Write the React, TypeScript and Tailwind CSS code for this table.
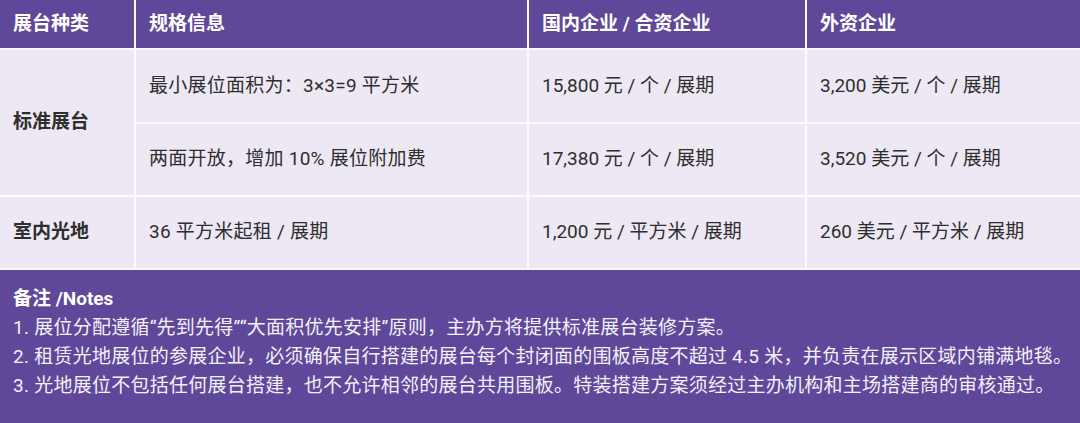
import React from "react";

const font = { fontFamily: 'Roboto, "Noto Sans CJK SC", sans-serif' };

export default function App() {
  const head = "bg-[#5f4899] text-white font-bold text-[19px] flex items-center px-[13px]";
  const cell = "bg-[#ede8f3] text-[#2e2e2e] text-[19px] flex items-center px-[13px]";
  return (
    <div className="w-[1080px] h-[423px] bg-[#fbfafd] flex flex-col [text-spacing-trim:space-all]" style={font}>
      <div className="grid grid-cols-[134px_391px_276px_1fr] grid-rows-[48px_72px_71px_71px] gap-[2px] bg-[#fbfafd]">
        <div className={head}>展台种类</div>
        <div className={head}>规格信息</div>
        <div className={head}>国内企业 / 合资企业</div>
        <div className={head}>外资企业</div>

        <div className={`${cell} row-span-2 font-bold`}>标准展台</div>
        <div className={`${cell} tracking-[0.25px]`}>最小展位面积为：3×3=9 平方米</div>
        <div className={cell}>15,800 元 / 个 / 展期</div>
        <div className={cell}>3,200 美元 / 个 / 展期</div>

        <div className={`${cell} tracking-[0.25px]`}>两面开放，增加 10% 展位附加费</div>
        <div className={cell}>17,380 元 / 个 / 展期</div>
        <div className={cell}>3,520 美元 / 个 / 展期</div>

        <div className={`${cell} font-bold`}>室内光地</div>
        <div className={`${cell} tracking-[0.25px]`}>36 平方米起租 / 展期</div>
        <div className={cell}>1,200 元 / 平方米 / 展期</div>
        <div className={cell}>260 美元 / 平方米 / 展期</div>
      </div>
      <div className="flex-1 mt-[2px] bg-[#5f4899] text-[#f3f0f8] text-[19px] leading-[29px] px-[13px] pt-[14px] whitespace-nowrap tracking-[0.25px]">
        <div className="font-bold text-white tracking-normal">备注 /Notes</div>
        <div>1. 展位分配遵循“先到先得”“大面积优先安排”原则，主办方将提供标准展台装修方案。</div>
        <div>2. 租赁光地展位的参展企业，必须确保自行搭建的展台每个封闭面的围板高度不超过 4.5 米，并负责在展示区域内铺满地毯。</div>
        <div>3. 光地展位不包括任何展台搭建，也不允许相邻的展台共用围板。特装搭建方案须经过主办机构和主场搭建商的审核通过。</div>
      </div>
    </div>
  );
}
